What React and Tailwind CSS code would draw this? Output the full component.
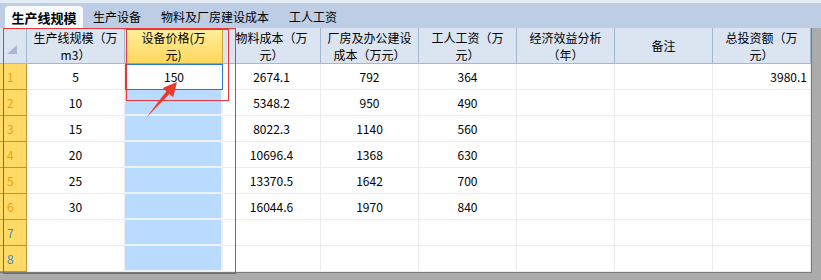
import React from "react";

const font = { fontFamily: '"Noto Sans CJK SC", "Noto Sans", sans-serif' };

const headers = [
  ["生产线规模（万", "m3）"],
  ["设备价格(万", "元)"],
  ["物料成本（万", "元）"],
  ["厂房及办公建设", "成本（万元）"],
  ["工人工资（万", "元）"],
  ["经济效益分析", "（年）"],
  ["备注"],
  ["总投资额（万", "元）"],
];

const rows = [
  ["5", "150", "2674.1", "792", "364", "", "", "3980.1"],
  ["10", "", "5348.2", "950", "490", "", "", ""],
  ["15", "", "8022.3", "1140", "560", "", "", ""],
  ["20", "", "10696.4", "1368", "630", "", "", ""],
  ["25", "", "13370.5", "1642", "700", "", "", ""],
  ["30", "", "16044.6", "1970", "840", "", "", ""],
  ["", "", "", "", "", "", "", ""],
  ["", "", "", "", "", "", "", ""],
];

const tabs = ["生产线规模", "生产设备", "物料及厂房建设成本", "工人工资"];

export default function App() {
  return (
    <div
      className="relative w-[821px] h-[280px] overflow-hidden bg-[#ababab] text-[12px] text-black"
      style={font}
    >
      {/* tab strip */}
      <div className="h-[28px] w-full bg-[#bccde4] border-t-[3px] border-[#e4ecf6] flex items-end">
        {tabs.map((t, i) =>
          i === 0 ? (
            <div
              key={t}
              className="ml-[5px] w-[78px] h-[22px] rounded-t-[3px] bg-[#f7f9fc] flex items-center justify-center font-bold text-[13px] leading-none"
            >
              {t}
            </div>
          ) : (
            <div key={t} className="h-[22px] px-[10px] flex items-center text-[12px] leading-none">
              {t}
            </div>
          )
        )}
      </div>

      {/* grid */}
      <div className="w-[812px] border-r border-[#7a7a7a] border-b bg-white">
        {/* header row */}
        <div className="flex h-[36px]">
          <div className="relative w-[27px] h-full bg-[#dbe5f2] border-r border-b border-[#a3b7cf]">
            <svg className="absolute left-[7px] top-[17px]" width="10" height="9" viewBox="0 0 10 9">
              <polygon points="10,0 10,9 0,9" fill="#a8b9d0" />
            </svg>
          </div>
          {headers.map((h, i) => (
            <div
              key={i}
              className={`w-[98px] h-full flex flex-col items-center justify-center border-r border-b ${
                i === 1
                  ? "bg-gradient-to-b from-[#fff09c] to-[#ffd75a] border-[#c9a23a]"
                  : "bg-[#dbe5f2] border-[#a3b7cf]"
              }`}
            >
              {h.map((l) => (
                <span key={l} className="block h-[17px] leading-[17px]">
                  {l}
                </span>
              ))}
            </div>
          ))}
        </div>

        {/* body rows */}
        {rows.map((r, ri) => (
          <div key={ri} className="flex h-[26px]">
            <div
              className={`w-[27px] h-full bg-[#ffda66] border-r border-b border-[#c4923c] pl-[7px] flex items-center ${
                ri < 6 ? "text-[#f2a100]" : "text-[#3c86d6]"
              }`}
            >
              {ri + 1}
            </div>
            {r.map((v, ci) => {
              if (ci === 1 && ri === 0) {
                return (
                  <div
                    key={ci}
                    className="w-[98px] h-full bg-white border border-[#2a7acb] flex items-center justify-center"
                  >
                    {v}
                  </div>
                );
              }
              if (ci === 1) {
                return (
                  <div key={ci} className="w-[98px] h-full bg-[#b8dbff] border-r-2 border-b-2 border-[#f0f0f0]" />
                );
              }
              return (
                <div
                  key={ci}
                  className={`w-[98px] h-full border-r border-b border-[#ececec] flex items-center ${
                    ci === 7 ? "justify-end pr-[3px]" : "justify-center"
                  }`}
                >
                  {v}
                </div>
              );
            })}
          </div>
        ))}
      </div>

      {/* red annotation boxes */}
      <div className="absolute left-[3px] top-[28px] w-[233px] h-[246px] border-[1.5px] border-[#e8383a]" />
      <div className="absolute left-[126px] top-[29px] w-[103px] h-[72px] border-[1.5px] border-[#e8383a]" />

      {/* red arrow */}
      <svg className="absolute left-[140px] top-[78px]" width="45" height="45" viewBox="0 0 45 45">
        <polygon
          points="37,4 33.2,19.2 29.4,15.9 6,40 26.4,13.3 22.6,10"
          fill="#ea3a2e"
        />
      </svg>
    </div>
  );
}
